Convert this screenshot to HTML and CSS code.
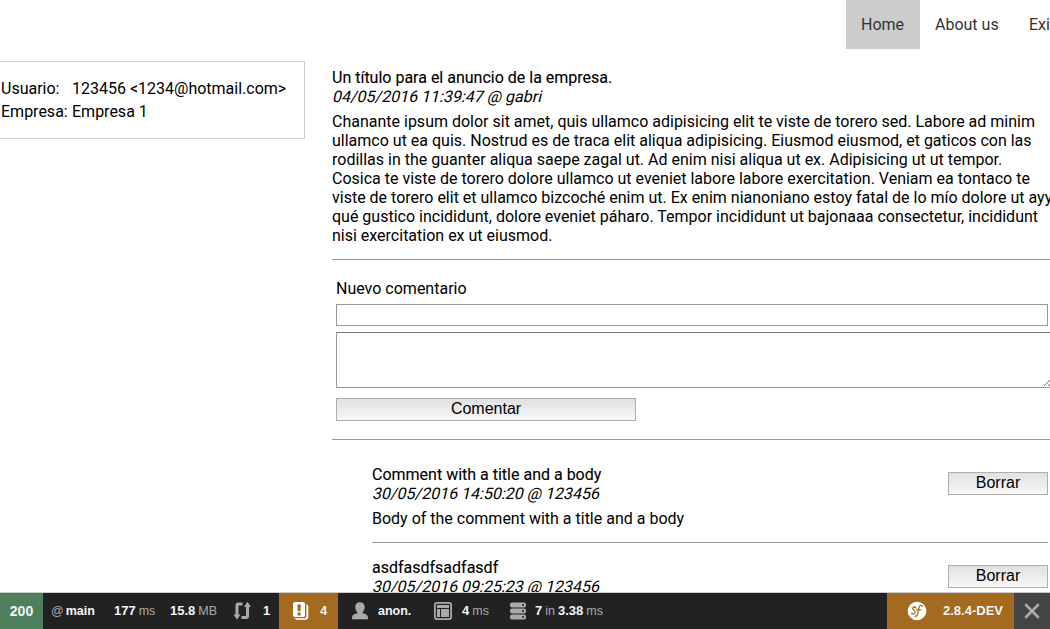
FILE: index.html
```html
<!DOCTYPE html>
<html lang="es">
<head>
<meta charset="utf-8">
<title>Anuncio</title>
<link rel="stylesheet" href="styles.css">
</head>
<body>
<header class="topbar">
  <nav class="menu"><a class="menu-item active">Home</a><a class="menu-item about">About us</a><a class="menu-item">Exit</a></nav>
</header>
<div class="layout">
  <aside class="profile">
    <dl class="profile-data"><dt>Usuario:</dt><dd>123456 &lt;1234@hotmail.com&gt;</dd><dt>Empresa:</dt><dd>Empresa 1</dd></dl>
  </aside>
  <main class="content">
    <article class="post">
      <h1 class="title">Un título para el anuncio de la empresa.</h1>
      <p class="meta">04/05/2016 11:39:47 @ gabri</p>
      <p class="text">Chanante ipsum dolor sit amet, quis ullamco adipisicing elit te viste de torero sed. Labore ad minim<br>ullamco ut ea quis. Nostrud es de traca elit aliqua adipisicing. Eiusmod eiusmod, et gaticos con las<br>rodillas in the guanter aliqua saepe zagal ut. Ad enim nisi aliqua ut ex. Adipisicing ut ut tempor.<br>Cosica te viste de torero dolore ullamco ut eveniet labore labore exercitation. Veniam ea tontaco te<br>viste de torero elit et ullamco bizcoché enim ut. Ex enim nianoniano estoy fatal de lo mío dolore ut ayy<br>qué gustico incididunt, dolore eveniet páharo. Tempor incididunt ut bajonaaa consectetur, incididunt<br>nisi exercitation ex ut eiusmod.</p>
    </article>
    <form class="comment-form">
      <label class="form-label">Nuevo comentario</label>
      <input class="field" type="text">
      <textarea class="area"></textarea>
      <button class="button submit" type="button">Comentar</button>
    </form>
    <section class="comments">
      <article class="comment">
        <div><h2 class="title">Comment with a title and a body</h2><p class="meta">30/05/2016 14:50:20 @ 123456</p><p class="text">Body of the comment with a title and a body</p></div>
        <button class="button remove" type="button">Borrar</button>
      </article>
      <article class="comment">
        <div><h2 class="title">asdfasdfsadfasdf</h2><p class="meta">30/05/2016 09:25:23 @ 123456</p></div>
        <button class="button remove" type="button">Borrar</button>
      </article>
    </section>
  </main>
</div>
<footer class="toolbar">
  <div class="block status"><b>200</b></div>
  <div class="block route"><span>@</span> <b class="word">main</b></div>
  <div class="block time"><b>177</b> <span>ms</span></div>
  <div class="block memory"><b>15.8</b> <span>MB</span></div>
  <div class="block ajax">
    <svg class="icon" width="20" height="20" viewBox="0 0 20 20"><path d="M9.500 3H5.500Q4 3 4 4.500V14M8.500 16.500H13Q14.500 16.500 14.500 15V6" fill="none" stroke="#aaa" stroke-width="3"/><path d="M.5 13.500H7.500L4 18.700zM11 6H18L14.500 .8z" fill="#aaa"/></svg>
    <b>1</b>
  </div>
  <div class="block logs">
    <svg class="icon" width="18" height="20" viewBox="0 0 18 20"><path d="M3 1H11Q13 1 13 3V14Q13 16 11 16H3Q1 16 1 14V3Q1 1 3 1z" fill="#fff"/><path d="M14.700 3.500Q16 4 16 5.500V16Q16 18.500 13.500 18.500H5Q3.500 18.500 3 17.500H12.500Q14.700 17.500 14.700 15z" fill="#fff" stroke="#fff" stroke-width=".6"/><path d="M5.300 3.500H8.900L8.500 10.300H5.700zM5.500 11.600H8.700V14.400H5.500z" fill="#a46a1f"/></svg>
    <b>4</b>
  </div>
  <div class="block user">
    <svg class="icon" width="18" height="20" viewBox="0 0 18 20"><path d="M9 1.200C6 1.200 4.300 3 4.300 6C4.300 8.500 5.300 10.300 6.500 11.300V12L3.200 13.300Q1 14.200 1 16.500V18.300H17V16.500Q17 14.200 14.800 13.300L11.500 12V11.300C12.700 10.300 13.700 8.500 13.700 6C13.700 3 12 1.200 9 1.200z" fill="#aaa"/></svg>
    <b class="word">anon.</b>
  </div>
  <div class="block twig">
    <svg class="icon" width="20" height="20" viewBox="0 0 20 20"><rect x="1.900" y="1.900" width="16.200" height="16.200" rx="2" fill="none" stroke="#aaa" stroke-width="1.800"/><path d="M4 4H16V7H4zM4 8H7V16H4zM8 8H16V16H8z" fill="#aaa"/></svg>
    <b>4</b> <span>ms</span>
  </div>
  <div class="block database">
    <svg class="icon" width="18" height="20" viewBox="0 0 18 20"><rect x="1" y="1.500" width="16" height="5" rx="2" fill="#aaa"/><rect x="1" y="7.500" width="16" height="5" rx="2" fill="#aaa"/><rect x="1" y="13.500" width="16" height="5" rx="2" fill="#aaa"/><path d="M13 4H15M13 10H15M13 16H15" stroke="#222" stroke-width="1.300"/></svg>
    <b>7</b> <span>in</span> <b>3.38</b> <span>ms</span>
  </div>
  <div class="block version">
    <svg class="icon" width="20" height="20" viewBox="0 0 20 20"><circle cx="10" cy="10" r="9.300" fill="#fff"/><path d="M8.900 7Q8.700 5.900 7.500 6Q5.500 6.300 5.800 7.900C6 9.300 8.600 9.500 8.100 11.600Q7.600 13.300 5.800 13.100Q4.600 12.900 4.900 12M15.400 5.300C14.700 3.600 12.500 4.300 12 6.700L10.800 12.500Q10 15.800 8.200 15.200M9.700 8.800H13.800" fill="none" stroke="#a46a1f" stroke-width="1.300" stroke-linecap="round"/></svg>
    <b>2.8.4-DEV</b>
  </div>
  <div class="block close"><svg width="16" height="16" viewBox="0 0 16 16"><path d="M2 2L14 14M14 2L2 14" stroke="#aaa" stroke-width="2.600" stroke-linecap="round"/></svg></div>
</footer>
</body>
</html>
```
FILE: styles.css
```css
* { box-sizing: border-box; }
html { overflow: hidden; }
body { margin: 0; height: 629px; overflow: hidden; background: #fff; color: #000; font: 16px/19px Roboto, sans-serif; display: flex; flex-direction: column; }
h1, h2, p, dl, dd { margin: 0; font-size: 16px; font-weight: 400; }
.topbar { height: 61px; flex: none; padding-left: 846px; }
.menu { display: flex; width: 230px; height: 49px; }
.menu-item { padding: 0 15px; line-height: 49px; color: #333; white-space: nowrap; }
.menu-item.active { width: 74px; background: #ccc; }
.menu-item.about { width: 94px; }
.layout { flex: 1; min-height: 0; overflow: hidden; display: flex; align-items: flex-start; }
.profile { width: 305px; height: 78px; flex: none; border: 1px solid #ccc; border-left: 0; padding: 15px 0 0 1px; }
.profile-data { display: grid; grid-template-columns: 71px 1fr; line-height: 23px; white-space: nowrap; }
.content { flex: none; width: 723px; margin-left: 27px; padding-top: 7px; }
.title { -webkit-text-stroke: .12px #000; }
.meta { transform: skewX(-13deg); transform-origin: 0 15px; }
.text { margin-top: 6px; white-space: nowrap; }
.post { height: 191px; }
.comment-form { border: solid #9a9a9a; border-width: 1px 0; height: 181px; padding: 19px 0 0 4px; display: flex; flex-direction: column; align-items: flex-start; }
.field { margin-top: 6px; width: 712px; height: 22px; border: 1px solid #999; background: #fff; padding: 0; }
.area { margin: 6px 0 0; width: 717px; height: 56px; border: 1px solid #999; border-top-color: #777; background: #fff; resize: both; }
.button { height: 23px; border: 1px solid #adadad; background: linear-gradient(#e1e1e1, #f7f7f7); padding: 0 0 2px; font: 16px/19px "Liberation Sans", Arial, sans-serif; color: #000; }
.submit { width: 300px; margin-top: 10px; }
.comments { width: 716px; padding: 15px 0 0 40px; }
.comment { height: 93px; padding-top: 10px; display: flex; justify-content: space-between; align-items: flex-start; }
.comment:first-child { height: 88px; border-bottom: 1px solid #9a9a9a; }
.comment + .comment { padding-top: 15px; }
.remove { width: 100px; margin-top: 7px; }
.toolbar { flex: none; height: 37px; border-top: 1px solid #ccc; background: #222; display: flex; color: #aaa; font: 13px/36px "Liberation Sans", Arial, sans-serif; white-space: nowrap; overflow: hidden; }
.toolbar b { color: #f5f5f5; }
.toolbar span { font-size: 12.5px; }
.toolbar .word { font-size: 12.5px; }
.block { height: 36px; display: flex; align-items: center; gap: 3px; flex: none; }
.status { width: 43px; background: #4f805d; justify-content: center; font-size: 14px; }
.route { width: 71px; padding-left: 8px; gap: 2px; }
.time { width: 56px; }
.memory { width: 63px; }
.ajax { width: 46px; gap: 10px; }
.logs { width: 59px; background: #a46a1f; padding-left: 13px; gap: 10px; }
.user { width: 95px; padding-left: 13px; gap: 9px; }
.twig { width: 76px; }
.twig .icon { margin-right: 6px; }
.database .icon { margin-right: 5px; }
.version { width: 127px; margin-left: auto; background: #a46a1f; padding-left: 20px; gap: 16px; }
.close { width: 36px; background: #444; justify-content: center; }
```
